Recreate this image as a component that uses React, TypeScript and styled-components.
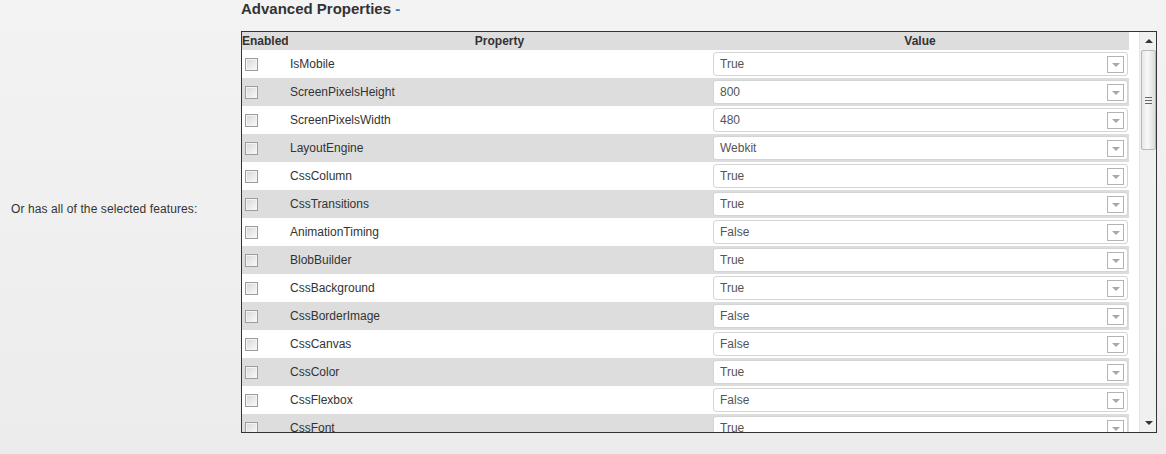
import React, { FC } from "react"
import styled, { createGlobalStyle } from "styled-components"

const GlobalStyle = createGlobalStyle`
  html, body {
    margin: 0;
    padding: 0;
    height: 100%;
  }

  body {
    background: linear-gradient(#f3f3f3, #ececec);
    font-family: "Liberation Sans", Arial, sans-serif;
    font-size: 12px;
    color: #333;
  }
`

const Page = styled.div`
  display: grid;
  grid-template-columns: 241px 916px;
  height: 454px;
`

const Label = styled.div`
  padding: 202px 0 0 11px;
  line-height: 14px;
  letter-spacing: 0.1px;
  color: #333;
`

const Section = styled.section`
  display: flex;
  flex-direction: column;
`

const Heading = styled.h3`
  margin: 0;
  height: 31px;
  font-size: 15px;
  line-height: 18px;
  font-weight: bold;
  color: #333;
`

const Toggle = styled.span`
  color: #2a7ab5;
`

const Box = styled.div`
  display: flex;
  height: 402px;
  box-sizing: border-box;
  border: 1px solid #333;
  background: #fff;
  overflow: hidden;
`

const Grid = styled.div`
  width: 887px;
  flex: 0 0 887px;
  display: grid;
  grid-template-columns: 46px 423px 418px;
  grid-auto-rows: 28px;
  grid-template-rows: 18px;
  align-content: start;
`

const Gutter = styled.div`
  flex: 0 0 10px;
`

const HeadCell = styled.div<{ $align?: string }>`
  background: #ddd;
  font-weight: bold;
  line-height: 18px;
  text-align: ${({ $align }) => $align || "center"};
  color: #333;
`

const Cell = styled.div<{ $odd: boolean }>`
  background: ${({ $odd }) => ($odd ? "#ddd" : "#fff")};
  display: flex;
  align-items: center;
`

const CheckCell = styled(Cell)`
  padding-left: 3px;
`

const NameCell = styled(Cell)`
  padding-left: 2px;
  color: #333;
`

const ValueCell = styled(Cell)`
  padding: 0 1px 0 2px;
`

const Check = styled.span`
  width: 13px;
  height: 13px;
  box-sizing: border-box;
  border: 1px solid #9c9c9c;
  background: linear-gradient(135deg, #d6d6d6, #fbfbfb);
  box-shadow: inset 0 0 0 1px #f4f4f4;
`

const Select = styled.div`
  flex: 1;
  height: 24px;
  box-sizing: border-box;
  border: 1px solid #d4d4d4;
  border-radius: 3px;
  background: #fff;
  display: flex;
  align-items: center;
  justify-content: space-between;
  padding: 0 3px 0 6px;
  color: #555;
`

const DropButton = styled.span`
  width: 17px;
  height: 17px;
  box-sizing: border-box;
  border: 1px solid #b3b3b3;
  background: #fff;
  display: flex;
  align-items: center;
  justify-content: center;

  &::after {
    content: "";
    border-left: 4px solid transparent;
    border-right: 4px solid transparent;
    border-top: 4px solid #a8a8a8;
    margin-top: 1px;
  }
`

const Scrollbar = styled.div`
  flex: 0 0 17px;
  display: flex;
  flex-direction: column;
  background: #f0f0f0;
  border-left: 1px solid #e6e6e6;
`

const Arrow = styled.div<{ $down?: boolean }>`
  height: 18px;
  display: flex;
  align-items: center;
  justify-content: center;

  &::after {
    content: "";
    border-left: 4px solid transparent;
    border-right: 4px solid transparent;
    ${({ $down }) =>
      $down ? "border-top: 4px solid #333;" : "border-bottom: 4px solid #333;"}
  }
`

const Thumb = styled.div`
  height: 100px;
  margin: 0 1px;
  box-sizing: border-box;
  border: 1px solid #b9b9b9;
  border-radius: 2px;
  background: linear-gradient(90deg, #e6e6e6, #f8f8f8 40%, #dcdcdc);
  display: flex;
  align-items: center;
  justify-content: center;
`

const Grip = styled.span`
  width: 7px;
  height: 7px;
  background: repeating-linear-gradient(#666 0 1px, transparent 1px 3px);
`

const Track = styled.div`
  flex: 1;
`

type Row = { name: string; value: string }

const rows: Row[] = [
  { name: "IsMobile", value: "True" },
  { name: "ScreenPixelsHeight", value: "800" },
  { name: "ScreenPixelsWidth", value: "480" },
  { name: "LayoutEngine", value: "Webkit" },
  { name: "CssColumn", value: "True" },
  { name: "CssTransitions", value: "True" },
  { name: "AnimationTiming", value: "False" },
  { name: "BlobBuilder", value: "True" },
  { name: "CssBackground", value: "True" },
  { name: "CssBorderImage", value: "False" },
  { name: "CssCanvas", value: "False" },
  { name: "CssColor", value: "True" },
  { name: "CssFlexbox", value: "False" },
  { name: "CssFont", value: "True" },
]

const App: FC = () => (
  <>
    <GlobalStyle />
    <Page>
      <Label>Or has all of the selected features:</Label>
      <Section>
        <Heading>
          Advanced Properties <Toggle>-</Toggle>
        </Heading>
        <Box>
          <Grid>
            <HeadCell $align="left">Enabled</HeadCell>
            <HeadCell>Property</HeadCell>
            <HeadCell>Value</HeadCell>
            {rows.map((row, i) => {
              const odd = i % 2 === 1
              return (
                <React.Fragment key={row.name}>
                  <CheckCell $odd={odd}>
                    <Check />
                  </CheckCell>
                  <NameCell $odd={odd}>{row.name}</NameCell>
                  <ValueCell $odd={odd}>
                    <Select>
                      {row.value}
                      <DropButton />
                    </Select>
                  </ValueCell>
                </React.Fragment>
              )
            })}
          </Grid>
          <Gutter />
          <Scrollbar>
            <Arrow />
            <Thumb>
              <Grip />
            </Thumb>
            <Track />
            <Arrow $down />
          </Scrollbar>
        </Box>
      </Section>
    </Page>
  </>
)

export default App
